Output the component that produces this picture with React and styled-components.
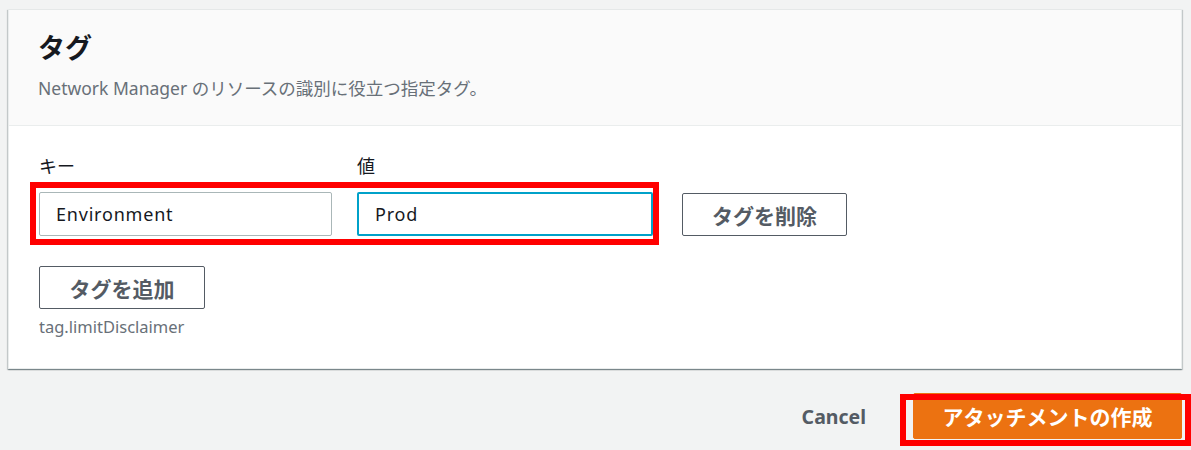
import styled, { createGlobalStyle } from "styled-components";

const GlobalStyle = createGlobalStyle`
  html, body {
    margin: 0;
    padding: 0;
    background: #f2f3f3;
    font-family: "Noto Sans", "Noto Sans CJK JP", sans-serif;
    color: #16191f;
  }
`;

const Page = styled.div`
  width: 1191px;
  height: 450px;
  padding: 9px 9px 0 8px;
  box-sizing: border-box;
  overflow: hidden;
`;

const Card = styled.section`
  background: #fff;
  border: 1px solid #eaeded;
  border-top-color: #e5e8e8;
  box-shadow: 0 1px 1px 0 rgba(0, 28, 36, 0.3), 1px 1px 1px 0 rgba(0, 28, 36, 0.15),
    -1px 1px 1px 0 rgba(0, 28, 36, 0.15);
  height: 360px;
  box-sizing: border-box;
  display: flex;
  flex-direction: column;
`;

const Header = styled.header`
  background: #fafafa;
  border-bottom: 1px solid #eaeded;
  height: 116px;
  box-sizing: border-box;
  padding: 21px 29px 0;
`;

const Title = styled.h2`
  margin: 0;
  font-size: 27px;
  line-height: 34px;
  font-weight: 700;
`;

const Description = styled.p`
  margin: 11px 0 0;
  font-size: 17.5px;
  line-height: 24px;
  color: #687078;
`;

const Body = styled.div`
  padding: 28px 30px 0;
`;

const Row = styled.div`
  display: flex;
  align-items: flex-end;
  gap: 29px;
`;

const Fields = styled.div`
  position: relative;
  display: flex;
  gap: 25px;

  &::after {
    content: "";
    position: absolute;
    top: 28px;
    left: -9px;
    right: -6px;
    bottom: -9px;
    border: 6px solid #ff0000;
    pointer-events: none;
  }
`;

const Field = styled.label`
  display: flex;
  flex-direction: column;
  width: ${(p) => p.$width}px;
`;

const Label = styled.span`
  font-size: 18px;
  line-height: 24px;
  margin-bottom: 14px;
  color: #16191f;
`;

const Input = styled.input`
  box-sizing: border-box;
  height: 44px;
  width: 100%;
  margin: 0;
  font-family: inherit;
  font-size: 18px;
  letter-spacing: 0.8px;
  color: #16191f;
  background: #fff;
  border-radius: 2px;
  border: ${(p) => (p.$focused ? "2px solid #00a1c9" : "1px solid #aab7b8")};
  padding: 0 0 0 16px;
  outline: none;
`;

const Button = styled.button`
  box-sizing: border-box;
  width: ${(p) => p.$width}px;
  height: 43px;
  margin: 0;
  padding: 0;
  font-family: inherit;
  font-size: 21px;
  font-weight: 700;
  color: #545b64;
  background: #fff;
  border: 1px solid #545b64;
  border-radius: 2px;
  cursor: pointer;
`;

const AddArea = styled.div`
  margin-top: 30px;
  display: flex;
  flex-direction: column;
  align-items: flex-start;
`;

const Disclaimer = styled.span`
  margin-top: 7px;
  font-size: 16.5px;
  line-height: 22px;
  color: #687078;
`;

const Footer = styled.footer`
  display: flex;
  justify-content: flex-end;
  align-items: center;
  gap: 47px;
  margin-top: 24px;
`;

const TextButton = styled.button`
  background: none;
  border: none;
  padding: 0;
  font-family: inherit;
  font-size: 19.5px;
  font-weight: 700;
  color: #545b64;
  cursor: pointer;
`;

const Primary = styled.button`
  position: relative;
  box-sizing: border-box;
  width: 269px;
  height: 46px;
  margin: 0;
  font-family: inherit;
  font-size: 21px;
  font-weight: 700;
  color: #fff;
  background: #ec7211;
  border: 1px solid #ec7211;
  border-radius: 2px;
  cursor: pointer;

  &::after {
    content: "";
    position: absolute;
    top: 0;
    left: -14px;
    right: -10px;
    bottom: -8px;
    border: 6px solid #ff0000;
    pointer-events: none;
  }
`;

export default function App() {
  return (
    <>
      <GlobalStyle />
      <Page>
        <Card>
          <Header>
            <Title>タグ</Title>
            <Description>Network Manager のリソースの識別に役立つ指定タグ。</Description>
          </Header>
          <Body>
            <Row>
              <Fields>
                <Field $width={293}>
                  <Label>キー</Label>
                  <Input defaultValue="Environment" />
                </Field>
                <Field $width={296}>
                  <Label>値</Label>
                  <Input $focused defaultValue="Prod" />
                </Field>
              </Fields>
              <Button $width={165}>タグを削除</Button>
            </Row>
            <AddArea>
              <Button $width={166}>タグを追加</Button>
              <Disclaimer>tag.limitDisclaimer</Disclaimer>
            </AddArea>
          </Body>
        </Card>
        <Footer>
          <TextButton>Cancel</TextButton>
          <Primary>アタッチメントの作成</Primary>
        </Footer>
      </Page>
    </>
  );
}
